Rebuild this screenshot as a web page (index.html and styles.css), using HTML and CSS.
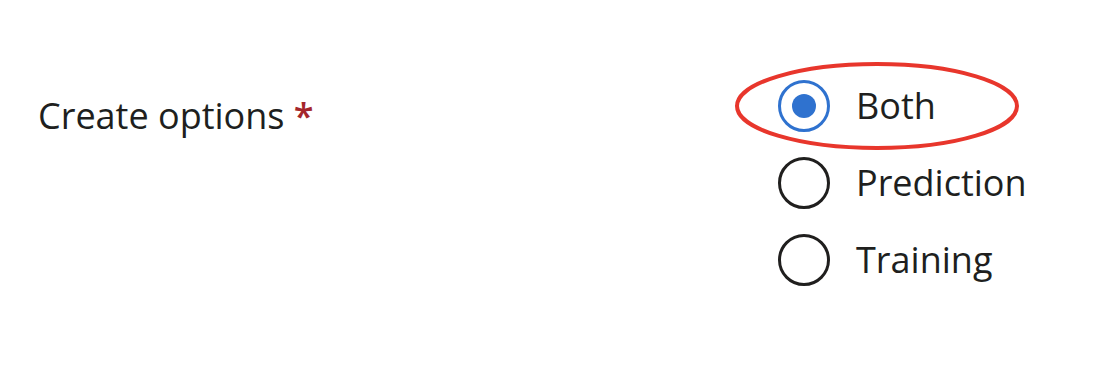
FILE: index.html
```html
<!DOCTYPE html>
<html>
<head>
	<title>Create options</title>
	<meta charset="utf-8">
	<meta name="viewport" content="width=device-width, initial-scale=1">
	<link rel="stylesheet" href="styles.css">
</head>
<body>
	<div class="field">
		<div class="field-label">Create options <span class="required">*</span></div>
		<div class="radio-group">
			<label class="radio-option">
				<span class="radio checked"></span>
				<span class="radio-text">Both</span>
				<svg class="highlight" width="286" height="90" viewBox="0 0 286 90">
					<ellipse cx="143" cy="45" rx="140" ry="42" fill="none" stroke="#e8362c" stroke-width="4"/>
				</svg>
			</label>
			<label class="radio-option">
				<span class="radio"></span>
				<span class="radio-text">Prediction</span>
			</label>
			<label class="radio-option">
				<span class="radio"></span>
				<span class="radio-text">Training</span>
			</label>
		</div>
	</div>
</body>
</html>
```

FILE: styles.css
```css
body {
	margin: 0;
	background: #fff;
	font-family: "Open Sans", "Noto Sans", sans-serif;
	color: #201f1e;
}

.field {
	display: flex;
	padding: 80px 0 0 38px;
}

.field-label {
	width: 740px;
	font-size: 36px;
	line-height: 40px;
	margin-top: 16px;
}

.required {
	color: #a4262c;
	font-weight: 600;
}

.radio-group {
	display: flex;
	flex-direction: column;
	gap: 25px;
}

.radio-option {
	position: relative;
	display: flex;
	align-items: center;
	gap: 26px;
	height: 52px;
}

.radio {
	box-sizing: border-box;
	width: 52px;
	height: 52px;
	border: 3px solid #201f1e;
	border-radius: 50%;
	display: flex;
	align-items: center;
	justify-content: center;
}

.radio.checked {
	border-color: #2f72cf;
}

.radio.checked::after {
	content: "";
	width: 24px;
	height: 24px;
	border-radius: 50%;
	background: #2f72cf;
}

.radio-text {
	font-size: 36px;
	line-height: 40px;
}

.highlight {
	position: absolute;
	left: -44px;
	top: -19px;
}
```
